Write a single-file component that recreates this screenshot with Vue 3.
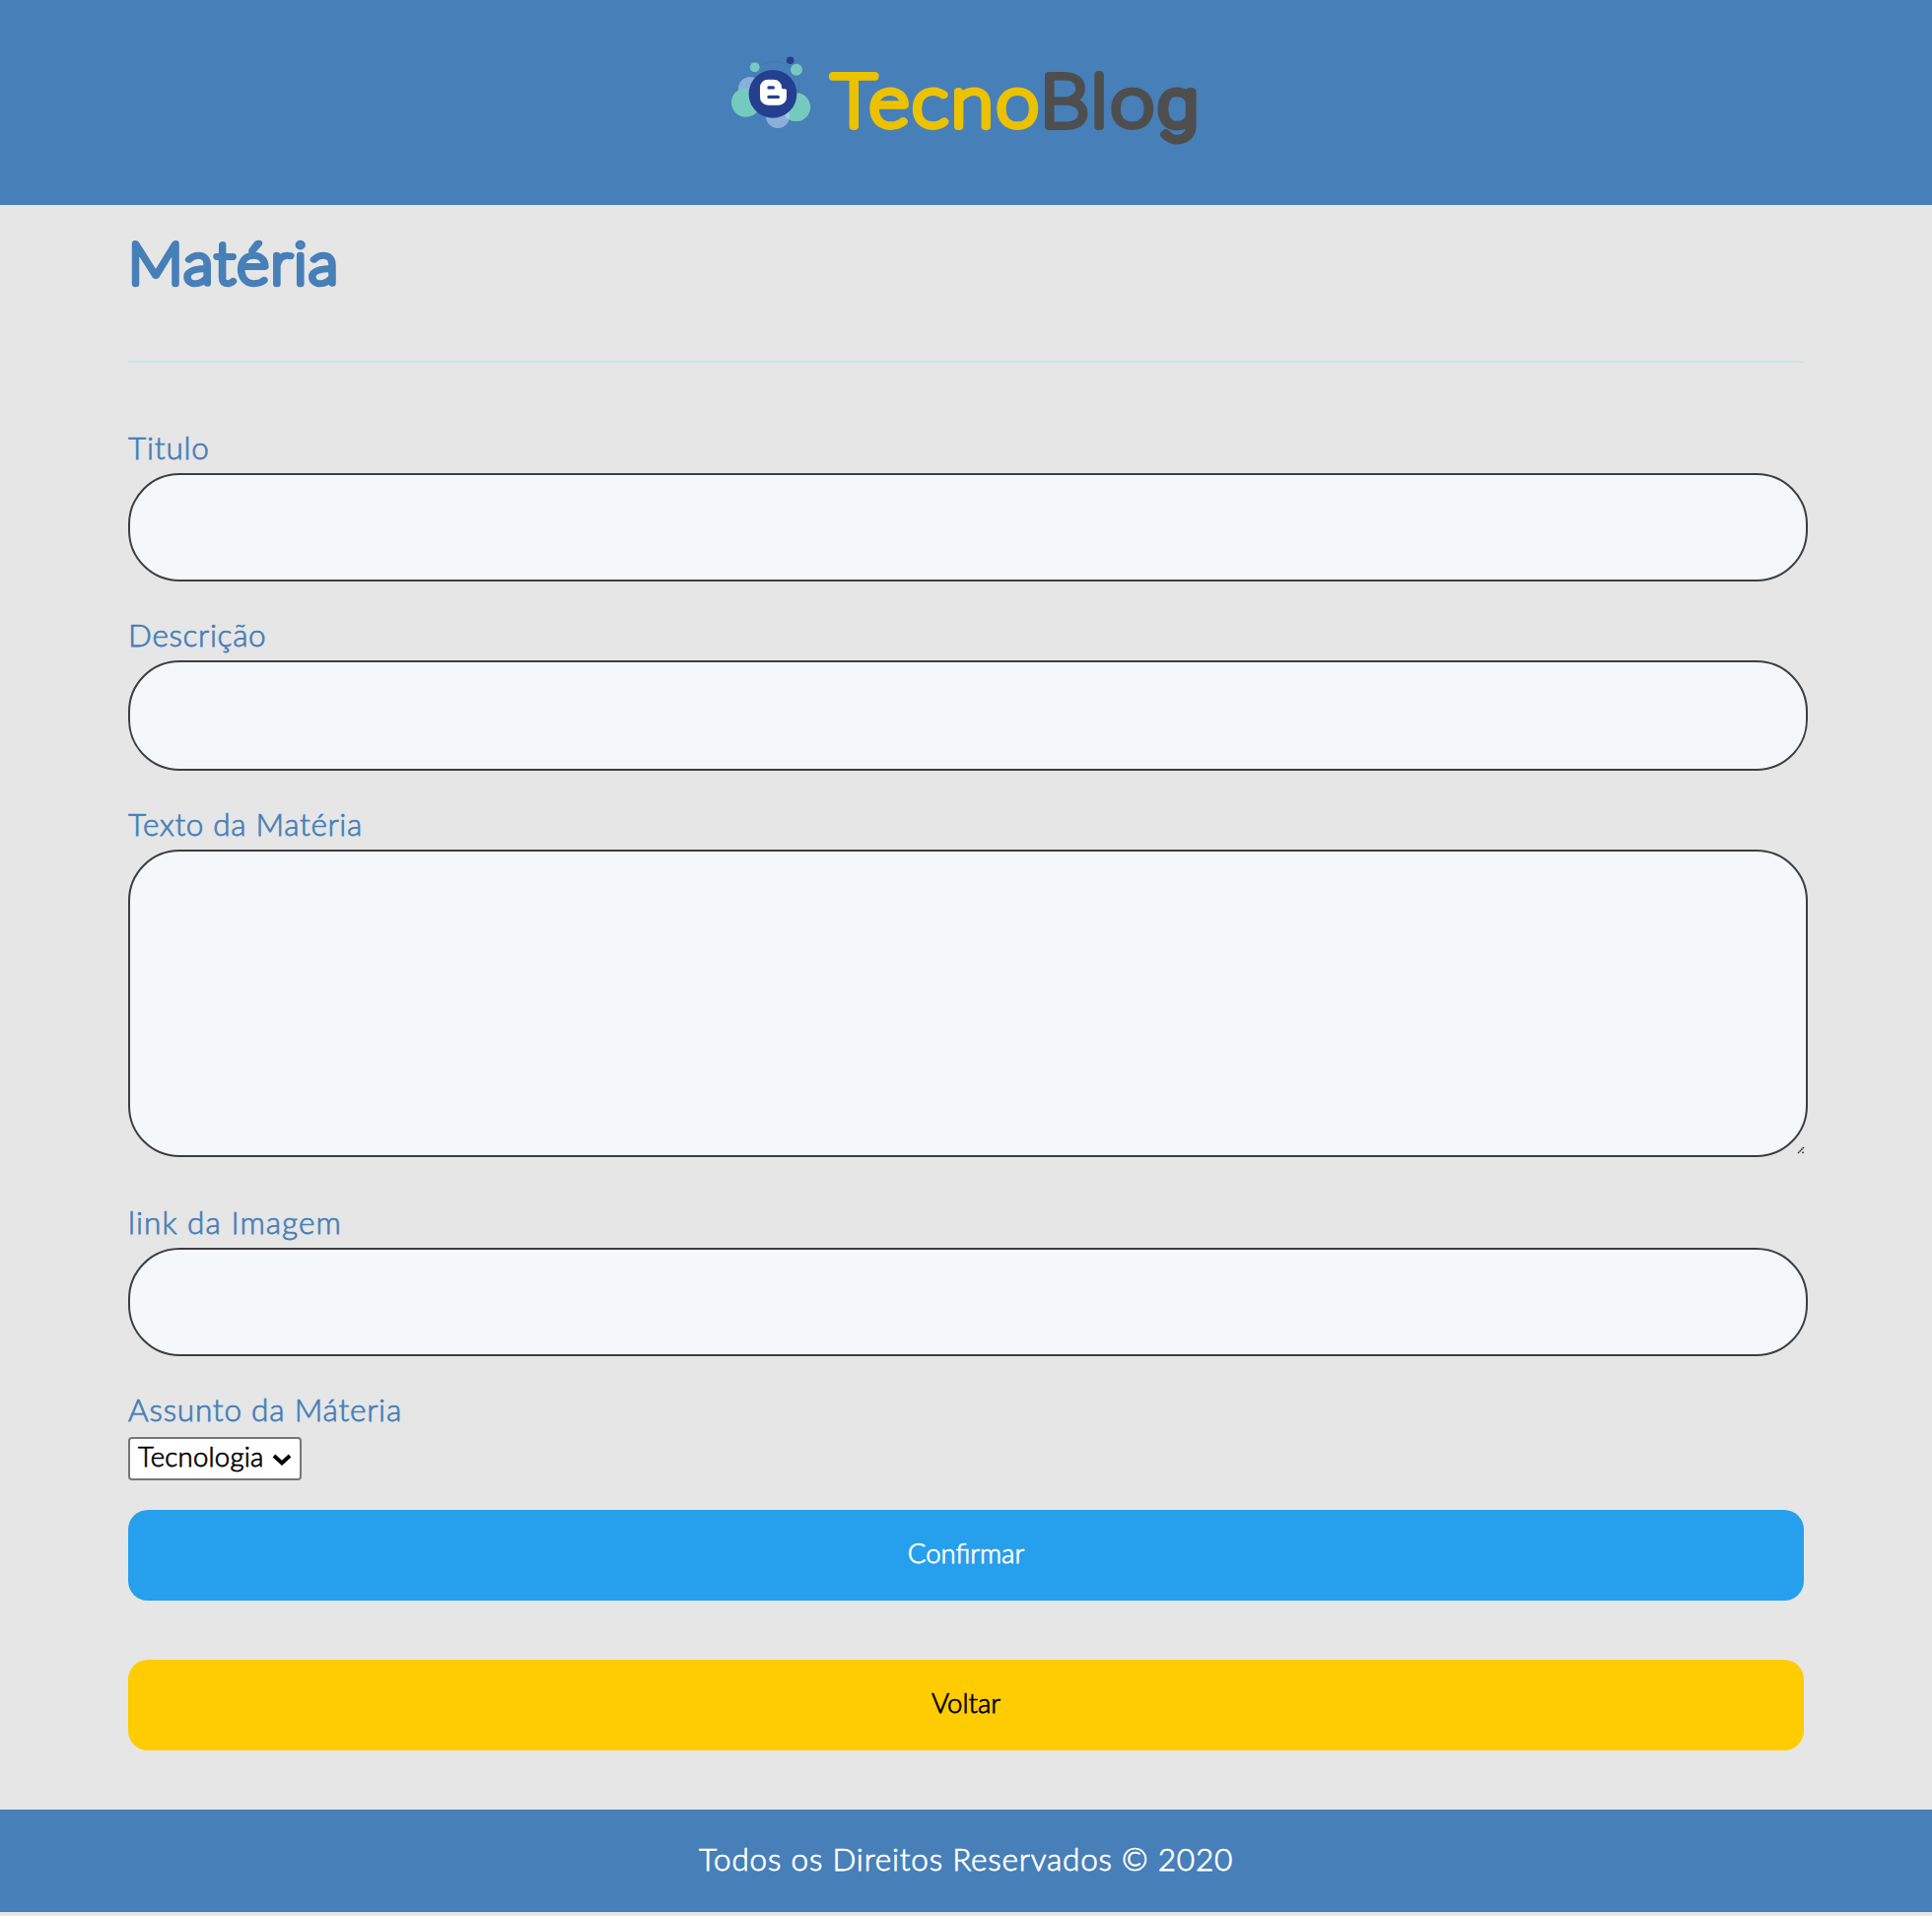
<script setup>
const topFields = [
  { id: 'titulo', label: 'Titulo', cls: 'titulo' },
  { id: 'descricao', label: 'Descrição', cls: 'descricao' },
]
</script>

<template>
  <div class="page">
    <header class="header">
      <svg class="logo" viewBox="0 0 480 100" aria-label="TecnoBlog">
        <circle cx="45.7" cy="32" r="25.5" fill="none" stroke="#3f73ae" stroke-width=".6" />
        <circle cx="21" cy="34" r="12" fill="#8aafda" />
        <circle cx="16.7" cy="48" r="14.7" fill="#75cabf" />
        <circle cx="67.7" cy="52.7" r="14.4" fill="#75cabf" />
        <circle cx="49" cy="62" r="12" fill="#bfd2f2" fill-opacity=".58" />
        <circle cx="25.7" cy="12.3" r="5" fill="#75cabf" />
        <circle cx="68" cy="14.7" r="6" fill="#75cabf" />
        <circle cx="61.7" cy="5.3" r="3.8" fill="#243f8f" />
        <circle cx="44" cy="39.3" r="24.4" fill="#243f8f" />
        <path fill="#fff" d="M39 24.7h6a8 8 0 0 1 8 8q0 1.5 1.5 1.5H56.5q1.5 0 1.5 1.5V42.7a8 8 0 0 1-8 8H39a8 8 0 0 1-8-8V32.7a8 8 0 0 1 8-8z" />
        <path stroke="#243f8f" stroke-width="3.2" stroke-linecap="round" d="M39.9 32.9h4.5M39.9 42.4h9.5" />
        <text class="tecno" x="104" y="71.6" textLength="213" lengthAdjust="spacingAndGlyphs">Tecno</text>
        <text class="blog" x="315" y="71.6" textLength="119" lengthAdjust="spacingAndGlyphs">Blo</text>
        <text class="blog g" x="434.5" y="71.6" textLength="41" lengthAdjust="spacingAndGlyphs">g</text>
      </svg>
    </header>

    <main class="content">
      <h1 class="title">
        <svg class="title-svg" viewBox="0 0 300 100"><text x="0" y="58.2" textLength="215" lengthAdjust="spacingAndGlyphs">Matéria</text></svg>
      </h1>
      <hr class="rule" />
      <form class="form" @submit.prevent>
        <div v-for="f in topFields" :key="f.id" class="field" :class="f.cls">
          <label :for="f.id"><span>{{ f.label }}</span></label>
          <input :id="f.id" type="text" />
        </div>
        <div class="field texto">
          <label for="texto"><span>Texto da Matéria</span></label>
          <div class="area">
            <textarea id="texto"></textarea>
            <svg class="grip" viewBox="0 0 8 8"><path d="M1 7 7 1M5.5 7 7 5.5" stroke="#333" stroke-width="1.5" stroke-dasharray="1.8 .4" /></svg>
          </div>
        </div>
        <div class="field link">
          <label for="link"><span>link da Imagem</span></label>
          <input id="link" type="text" />
        </div>
        <div class="field assunto">
          <label><span>Assunto da Máteria</span></label>
          <div class="select">
            <span>Tecnologia</span>
            <svg viewBox="0 0 20 14"><path d="M2 3 10 10.5 18 3" fill="none" stroke="#000" stroke-width="3.8" /></svg>
          </div>
        </div>
        <button class="btn confirm"><span>Confirmar</span></button>
        <button class="btn back"><span>Voltar</span></button>
      </form>
    </main>

    <footer class="footer"><span>Todos os Direitos Reservados © 2020</span></footer>
  </div>
</template>

<style>
body { margin: 0; background: #e6e6e6; }
</style>

<style scoped>
* { box-sizing: border-box; }
.page { height: 1944px; background: #e6e6e6; font-family: Lato, "Open Sans", sans-serif; font-weight: 300; -webkit-text-stroke: .75px; color: #477fb8; }
.header { height: 208px; padding: 56px 0 0 740px; background: #477fb8; }
.logo { display: block; width: 480px; height: 100px; overflow: visible; }
.logo text { font-size: 72.3px; font-weight: 100; letter-spacing: 3px; -webkit-text-stroke: 0; stroke-width: 7.8px; stroke-linejoin: round; }
.logo .g { font-family: Roboto, sans-serif; font-size: 66px; letter-spacing: 0; }
.logo .tecno { fill: #ecc200; stroke: #ecc200; }
.logo .blog { fill: #4e4e4e; stroke: #4e4e4e; }
.content { padding: 0 130px; }
.title { margin: 0; height: 158px; padding-top: 22px; }
.title-svg { display: block; width: 300px; height: 100px; overflow: visible; }
.title-svg text { font-size: 58.3px; font-weight: 100; letter-spacing: 2px; fill: #477fb8; stroke: #477fb8; stroke-width: 6.4px; stroke-linejoin: round; }
.rule { height: 2px; margin: 0 0 62px; border: 0; background: #d2e2e3; }
.form { display: flex; flex-direction: column; }
.field label { display: block; height: 50px; line-height: 48px; font-size: 31.5px; letter-spacing: .8px; white-space: nowrap; }
input, textarea { display: block; width: 1704px; height: 110px; margin: 0; padding: 0 40px; border: 2px solid #3e3e3e; border-radius: 52px; background: #f4f8fb; outline: none; font: inherit; resize: none; }
.titulo { height: 190px; }
.descricao { height: 192px; }
.descricao label, .texto label { letter-spacing: .68px; }
.descricao input { height: 112px; }
.texto { height: 404px; }
.area { position: relative; width: 1704px; }
textarea { height: 312px; }
.grip { position: absolute; right: 3px; bottom: 3px; width: 8px; height: 8px; }
.link { height: 190px; }
.link label { letter-spacing: 1.05px; }
.assunto { height: 126px; }
.assunto .select { margin-top: 2px; }
.select { display: flex; align-items: center; width: 176px; height: 44px; padding-left: 8px; border: 2px solid #767676; border-radius: 4px; background: #fff; color: #000; font-size: 27.5px; line-height: 38px; }
.select span { width: 136px; margin-top: -4px; letter-spacing: .25px; white-space: nowrap; }
.select svg { width: 20px; height: 14px; margin-top: 1px; }
.btn { height: 92px; padding: 0 0 4px; border: 0; border-radius: 20px; font: 300 27.5px/88px Lato, sans-serif; -webkit-text-stroke: .75px; }
.confirm { margin-bottom: 60px; background: #269fed; color: #fff; }
.back { margin-bottom: 60px; background: #ffcc02; color: #000; }
.footer { height: 104px; background: #477fb8; color: #fff; font-size: 31.5px; line-height: 101px; letter-spacing: .8px; text-align: center; }
</style>
